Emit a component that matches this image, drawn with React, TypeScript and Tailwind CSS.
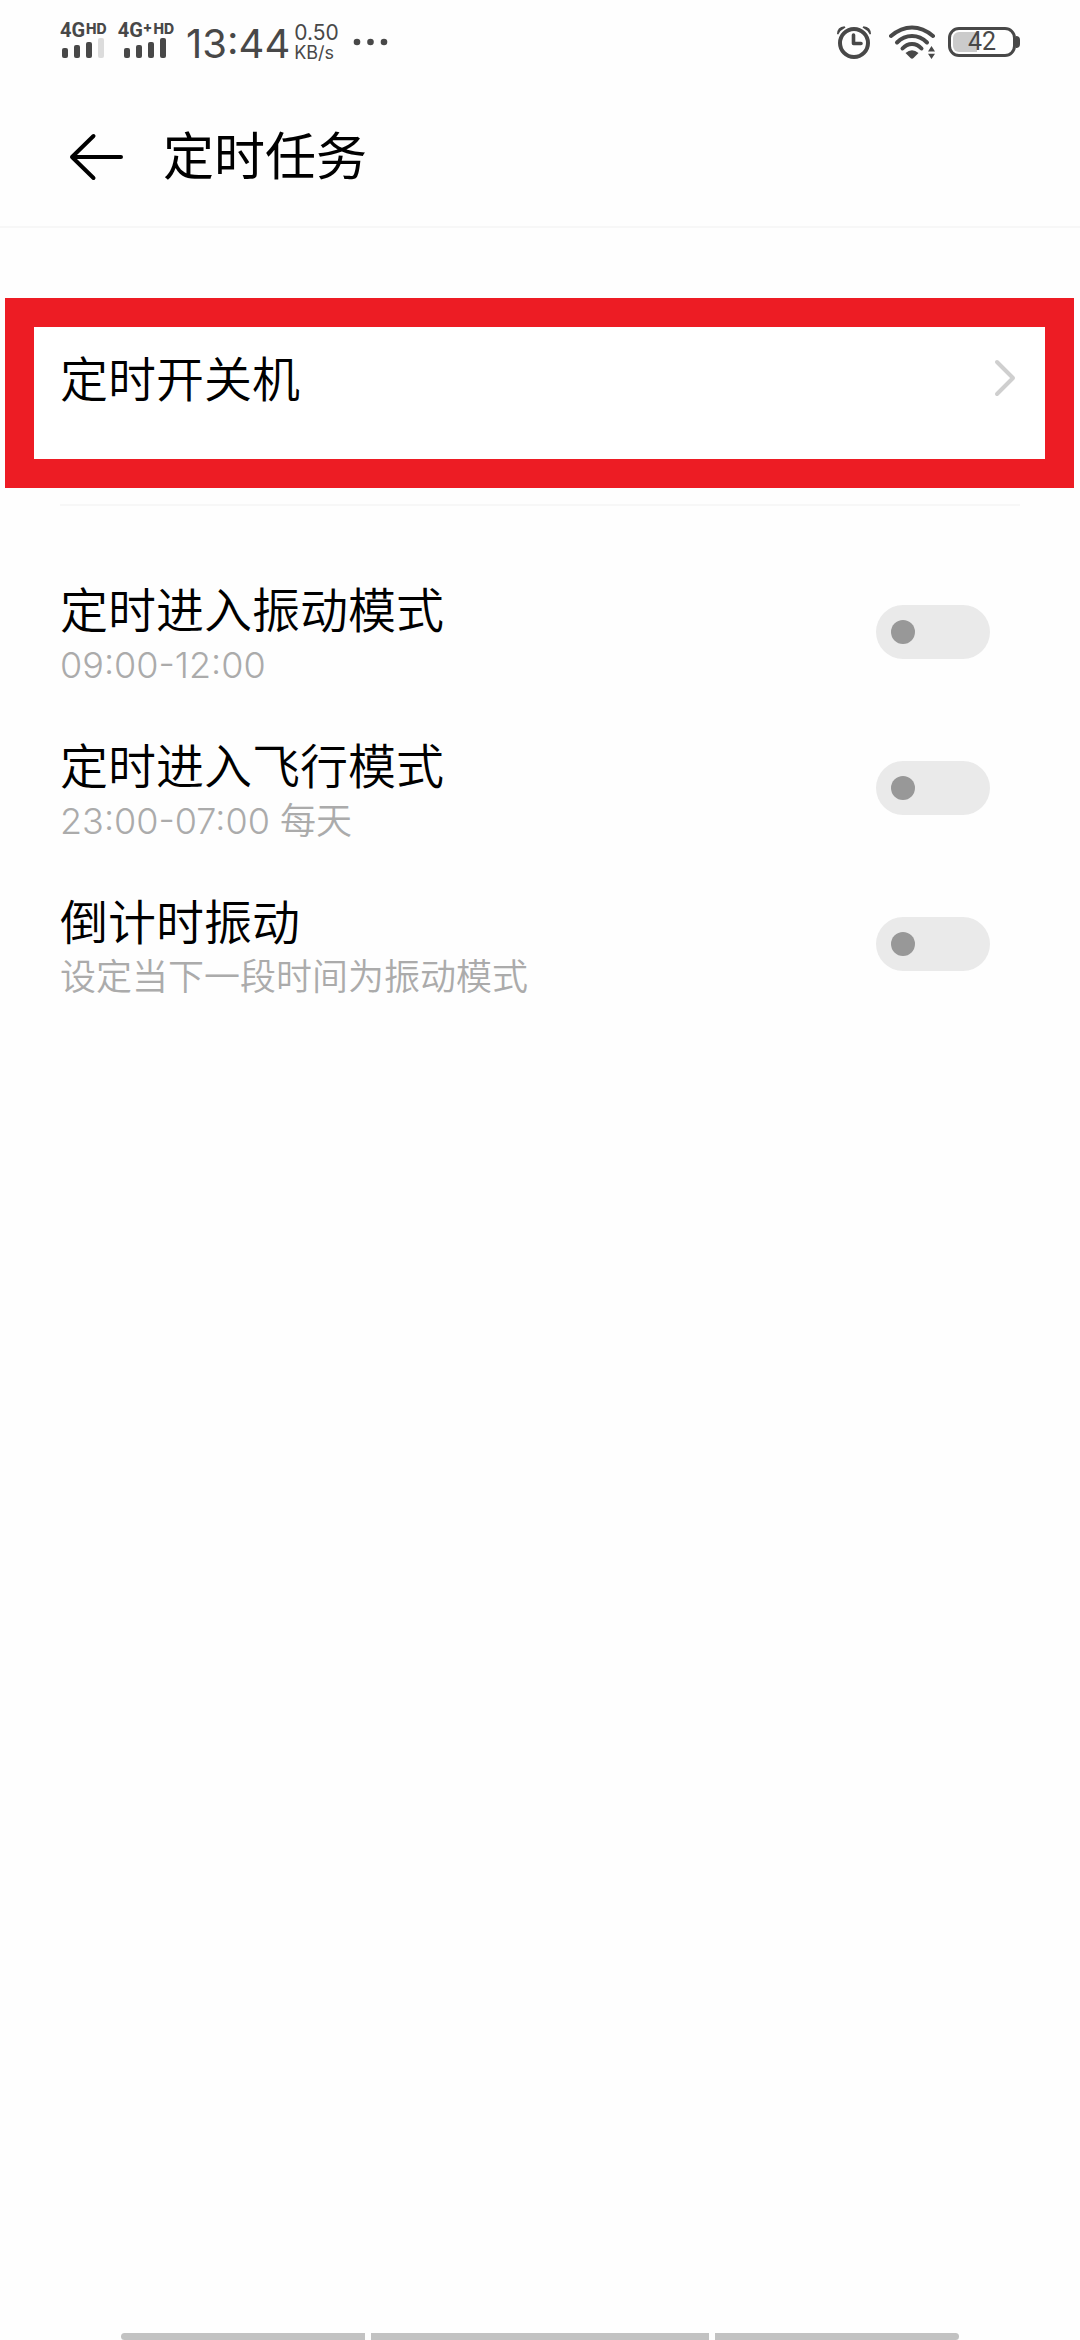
import { useState } from "react";

const tasks = [
    { id: "vibrate", title: "定时进入振动模式", detail: "09:00-12:00" },
    { id: "flight", title: "定时进入飞行模式", detail: "23:00-07:00 每天" },
    { id: "countdown", title: "倒计时振动", detail: "设定当下一段时间为振动模式" },
];

function Signal({ plus, level }: { plus?: boolean; level: number }) {
    const bars = ["h-[10px]", "h-[13px]", "h-4", "h-5"];
    return (
        <div className="flex flex-col">
            <div className="flex h-[15px] items-start font-['Roboto'] text-[20px] leading-[15px] font-bold">
                4G
                {plus && <span className="font-['Inter'] text-[14px] leading-[8px] font-extrabold">+</span>}
                <span className="ml-px font-['Inter'] text-[14px] leading-[11px] font-extrabold">HD</span>
            </div>
            <div className={`flex h-5 items-end gap-1.5 ${plus ? "pl-1.5" : "pl-0.5"}`}>
                {bars.map((h, i) => (
                    <span key={h} className={`w-1.5 rounded-[2px] ${h} ${i < level ? "bg-[#484848]" : "bg-[#dcdcdc]"}`} />
                ))}
            </div>
        </div>
    );
}

function StatusBar() {
    return (
        <div className="flex h-[84px] items-center justify-between px-[60px] font-normal text-[#484848]">
            <div className="flex items-center">
                <div className="flex gap-[11px] pb-1">
                    <Signal level={3} />
                    <Signal plus level={4} />
                </div>
                <span className="ml-3 pt-1 text-[40px] leading-[48px]">13:44</span>
                <div className="ml-1 flex flex-col pt-0.5">
                    <span className="text-[21px] leading-5">0.50</span>
                    <span className="text-[18px] leading-5">KB/s</span>
                </div>
                <svg className="ml-3.5 h-2 w-9" viewBox="0 0 36 8" fill="currentColor">
                    <circle cx="4" cy="4" r="3.3" />
                    <circle cx="17.5" cy="4" r="3.3" />
                    <circle cx="31" cy="4" r="3.3" />
                </svg>
            </div>
            <div className="flex items-center">
                <svg className="h-9 w-9" viewBox="0 0 36 36" fill="none" stroke="currentColor">
                    <circle cx="18" cy="19" r="14" strokeWidth="4" />
                    <path d="M17.5 11v8.5h7.5" strokeWidth="3.6" strokeLinecap="round" strokeLinejoin="round" />
                    <path d="M1 10Q1 3 8.500 2.200L9.500 3.500Q4.500 6 2.200 10.500ZM35 10Q35 3 27.500 2.200L26.500 3.500Q31.500 6 33.800 10.500Z" fill="currentColor" stroke="none" />
                </svg>
                <svg className="ml-[17px] h-9 w-12" viewBox="0 0 48 36" fill="none" stroke="currentColor" strokeWidth="4" strokeLinecap="round">
                    <path d="M2 12Q12 3.500 23 3.500T44 12" />
                    <path d="M8 18.500Q14.500 12 23 12T38 18.500" />
                    <path d="M13.500 24.500Q17.500 20 23 20T32.500 24.500" />
                    <path d="M16.500 29Q23 23.500 29.500 29L24.500 34Q23 35.500 21.500 34Z" fill="currentColor" stroke="none" />
                    <path d="M42.500 22L46 27.500H39ZM42.500 35L46 29.800H39Z" fill="currentColor" stroke="none" />
                </svg>
                <div className="ml-[11px] flex items-center">
                    <div className="relative h-[30px] w-[68px] rounded-[11px] border-3 border-[#484848] p-0.5">
                        <div className="h-full w-[24px] rounded-l-[6px] bg-[#cbcbcb]" />
                        <span className="absolute inset-0 flex items-center justify-center font-['Roboto'] text-[25px] leading-6">42</span>
                    </div>
                    <span className="h-3 w-1 rounded-r-full bg-[#484848]" />
                </div>
            </div>
        </div>
    );
}

function TaskRow({ id, title, detail }: { id: string; title: string; detail: string }) {
    const [on, setOn] = useState(false);
    return (
        <li className="flex h-[156px] items-center justify-between pr-[90px] pl-[60px]">
            <label htmlFor={id} className="flex flex-col pt-2.5">
                <span className="text-[48px] leading-[56px] text-black">{title}</span>
                <span className="text-[36px] leading-[52px] text-[#ababab]">{detail}</span>
            </label>
            <span className="relative flex">
                <input
                    id={id}
                    type="checkbox"
                    role="switch"
                    checked={on}
                    onChange={(e) => setOn(e.target.checked)}
                    className="peer h-[54px] w-[114px] appearance-none rounded-full bg-[#eaeaea] checked:bg-[#4a8cff]"
                />
                <span className="pointer-events-none absolute top-[15px] left-[15px] h-6 w-6 rounded-full bg-[#989898] transition-transform peer-checked:translate-x-[60px] peer-checked:bg-white" />
            </span>
        </li>
    );
}

export default function App() {
    return (
        <div className="flex min-h-screen flex-col bg-[#fefefe] font-['Inter','Noto_Sans_CJK_SC',sans-serif] font-[350]">
            <StatusBar />

            <header className="flex h-36 items-center border-b-2 border-[#f7f7f7] pt-1 pl-[69px]">
                <button type="button" aria-label="返回">
                    <svg className="h-12 w-[54px]" viewBox="0 0 54 48" fill="none" stroke="black" strokeWidth="4" strokeLinecap="round" strokeLinejoin="round">
                        <path d="M52 24H3M24.500 3L3 24L24.500 45" />
                    </svg>
                </button>
                <h1 className="ml-10 text-[51px] leading-[64px] font-normal text-black">定时任务</h1>
            </header>

            <main className="flex-1">
                <button
                    type="button"
                    className="mt-[70px] ml-[5px] flex h-[190px] w-[calc(100%-11px)] items-start justify-between border-[29px] border-[#ed1c24] bg-white pt-5 pr-7 pl-[26px]"
                >
                    <span className="text-[48px] leading-[66px] text-black">定时开关机</span>
                    <svg className="mt-[11px] h-10 w-6" viewBox="0 0 24 40" fill="none" stroke="#cfcfcf" strokeWidth="4" strokeLinecap="round" strokeLinejoin="round">
                        <path d="M4 4L20 20L4 36" />
                    </svg>
                </button>
                <hr className="mx-[60px] mt-4 border-t-2 border-[#f7f7f7]" />
                <ul className="mt-12">
                    {tasks.map((task) => (
                        <TaskRow key={task.id} {...task} />
                    ))}
                </ul>
            </main>

            <nav className="flex h-[7px] gap-1.5 px-[121px]">
                <button type="button" aria-label="最近任务" className="flex-[244] rounded-l-[4px] bg-[#c2c2c2]" />
                <button type="button" aria-label="主页" className="flex-[338] bg-[#c2c2c2]" />
                <button type="button" aria-label="返回上级" className="flex-[244] rounded-r-[4px] bg-[#c2c2c2]" />
            </nav>
        </div>
    );
}
